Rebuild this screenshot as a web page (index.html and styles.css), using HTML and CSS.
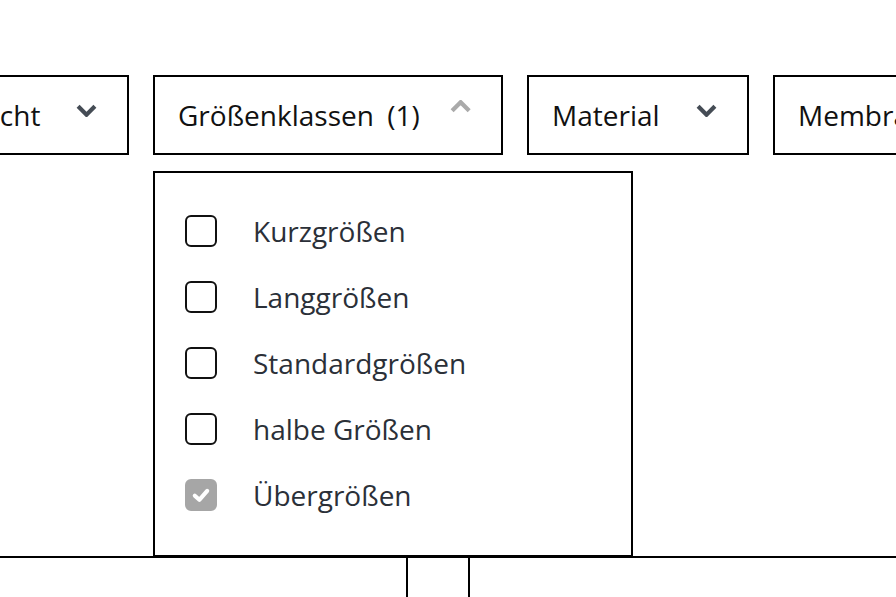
FILE: index.html
```html
<!DOCTYPE html>
<html lang="de">
<head>
    <meta charset="UTF-8">
    <meta name="viewport" content="width=device-width, initial-scale=1.0">
    <title>Filter</title>
    <link rel="stylesheet" href="styles.css">
</head>
<body>
    <div class="filters">
        <div class="filter-track">
            <button class="filter filter-weight">
                <span class="filter-label">Gewicht</span>
                <svg class="chevron" viewBox="0 0 20 12"><polyline points="2,2 10,10 18,2"/></svg>
            </button>

            <div class="filter-wrap">
                <button class="filter filter-sizes open">
                    <span class="filter-label">Größenklassen <span class="count">(1)</span></span>
                    <svg class="chevron up" viewBox="0 0 20 12"><polyline points="2,10 10,2 18,10"/></svg>
                </button>

                <div class="dropdown">
                    <label class="option">
                        <span class="box"></span>
                        <span class="option-text">Kurzgrößen</span>
                    </label>
                    <label class="option">
                        <span class="box"></span>
                        <span class="option-text">Langgrößen</span>
                    </label>
                    <label class="option">
                        <span class="box"></span>
                        <span class="option-text">Standardgrößen</span>
                    </label>
                    <label class="option">
                        <span class="box"></span>
                        <span class="option-text">halbe Größen</span>
                    </label>
                    <label class="option">
                        <span class="box checked">
                            <svg viewBox="0 0 16 16"><polyline points="3.5,8.5 6.8,11.5 12.5,5"/></svg>
                        </span>
                        <span class="option-text">Übergrößen</span>
                    </label>
                </div>
            </div>

            <button class="filter filter-material">
                <span class="filter-label">Material</span>
                <svg class="chevron" viewBox="0 0 20 12"><polyline points="2,2 10,10 18,2"/></svg>
            </button>

            <button class="filter">
                <span class="filter-label">Membran</span>
                <svg class="chevron" viewBox="0 0 20 12"><polyline points="2,2 10,10 18,2"/></svg>
            </button>
        </div>
    </div>

    <div class="results">
        <div class="result-tab"></div>
    </div>
</body>
</html>
```

FILE: styles.css
```css
body {
    margin: 0;
    font-family: 'Open Sans', 'Liberation Sans', sans-serif;
    background: #fff;
    overflow: hidden;
}

.filters {
    margin-top: 75px;
    height: 80px;
    position: relative;
    z-index: 2;
}

.filter-track {
    display: flex;
    gap: 24px;
    margin-left: -90px;
    white-space: nowrap;
}

.filter-wrap {
    position: relative;
}

.filter {
    display: flex;
    align-items: center;
    justify-content: space-between;
    gap: 30px;
    height: 80px;
    padding: 0 30px 0 23px;
    background: #fff;
    border: 2px solid #000;
    font-family: inherit;
    font-size: 28px;
    color: #111;
    cursor: pointer;
    flex-shrink: 0;
}

.filter-weight {
    width: 219px;
}

.filter-sizes {
    width: 350px;
}

.filter-material {
    width: 222px;
}

.count {
    margin-left: 6px;
}

.chevron {
    width: 21px;
    height: 13px;
    margin-bottom: 10px;
    fill: none;
    stroke: #454c55;
    stroke-width: 4;
}

.chevron.up {
    width: 22px;
    stroke: #aaaaaa;
    margin-bottom: 18px;
}

.dropdown {
    position: absolute;
    top: 96px;
    left: 0;
    box-sizing: border-box;
    width: 480px;
    padding: 25px 0 27px 30px;
    background: #fff;
    border: 2px solid #000;
}

.option {
    display: flex;
    align-items: center;
    gap: 36px;
    height: 66px;
    font-size: 28px;
    color: #2b3038;
}

.box {
    width: 28px;
    height: 28px;
    border: 2px solid #111;
    border-radius: 6px;
    display: flex;
    align-items: center;
    justify-content: center;
    flex-shrink: 0;
}

.box.checked {
    background: #a6a6a6;
    border-color: #a6a6a6;
}

.box svg {
    width: 22px;
    height: 22px;
    fill: none;
    stroke: #fff;
    stroke-width: 3;
    stroke-linecap: round;
    stroke-linejoin: round;
}

.results {
    margin-top: 401px;
    border-top: 2px solid #000;
}

.result-tab {
    margin-left: 406px;
    width: 60px;
    height: 60px;
    border-left: 2px solid #000;
    border-right: 2px solid #000;
}
```
